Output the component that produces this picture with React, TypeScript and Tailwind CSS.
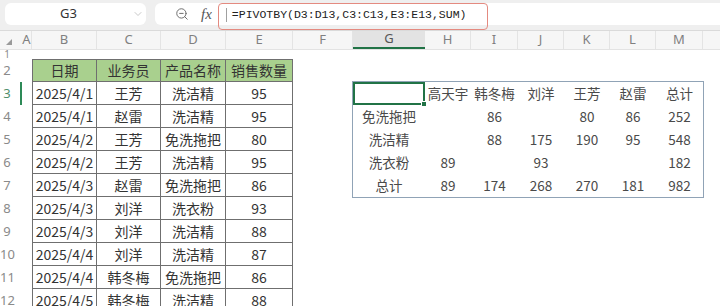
import { ChevronDown, ZoomOut } from "lucide-react";

const cols = [
  { l: "A", w: "w-[10px]" },
  { l: "B", w: "w-[65px]" },
  { l: "C", w: "w-[64px]" },
  { l: "D", w: "w-[65px]" },
  { l: "E", w: "w-[67px]" },
  { l: "F", w: "w-[60px]" },
  { l: "G", w: "w-[72px]", sel: true },
  { l: "H", w: "w-[46px]" },
  { l: "I", w: "w-[47px]" },
  { l: "J", w: "w-[46px]" },
  { l: "K", w: "w-[46px]" },
  { l: "L", w: "w-[46px]" },
  { l: "M", w: "w-[47px]" },
];

const tableW = ["w-[65px]", "w-[64px]", "w-[65px]", "w-[67px]"];

const data = [
  ["日期", "业务员", "产品名称", "销售数量"],
  ["2025/4/1", "王芳", "洗洁精", "95"],
  ["2025/4/1", "赵雷", "洗洁精", "95"],
  ["2025/4/2", "王芳", "免洗拖把", "80"],
  ["2025/4/2", "王芳", "洗洁精", "95"],
  ["2025/4/3", "赵雷", "免洗拖把", "86"],
  ["2025/4/3", "刘洋", "洗衣粉", "93"],
  ["2025/4/3", "刘洋", "洗洁精", "88"],
  ["2025/4/4", "刘洋", "洗洁精", "87"],
  ["2025/4/4", "韩冬梅", "免洗拖把", "86"],
  ["2025/4/5", "韩冬梅", "洗洁精", "88"],
];

const pivot = [
  ["", "高天宇", "韩冬梅", "刘洋", "王芳", "赵雷", "总计"],
  ["免洗拖把", "", "86", "", "80", "86", "252"],
  ["洗洁精", "", "88", "175", "190", "95", "548"],
  ["洗衣粉", "89", "", "93", "", "", "182"],
  ["总计", "89", "174", "268", "270", "181", "982"],
];

export default function App() {
  return (
    <div className="w-[720px] h-[306px] overflow-hidden bg-white font-['Noto_Sans_CJK_SC','Noto_Sans',sans-serif]">
      {/* 名称框 + 编辑栏 */}
      <div className="h-[31px] bg-[#efefef] flex items-start pt-[3px] pl-[5px] border-b border-[#dadada]">
        <div className="w-[141px] h-[22px] bg-white rounded-[6px] flex items-center">
          <span className="flex-1 text-center text-[13px] text-[#333] font-['Noto_Sans',sans-serif]">G3</span>
          <ChevronDown className="w-[12px] h-[12px] text-[#b5b5b5] mr-[2px]" strokeWidth={1.5} />
        </div>
        <div className="ml-[9px] flex-1 h-[22px] bg-white rounded-l-[6px] flex items-center">
          <ZoomOut className="ml-[20px] w-[14px] h-[14px] text-[#666]" strokeWidth={1.6} />
          <span className="ml-[12px] text-[15px] italic text-[#555] font-['Liberation_Serif',serif] leading-none">fx</span>
          <div className="ml-[6px] self-start w-[270px] h-[27px] border border-[#e48a80] rounded-[4px] flex items-center pb-[3px]">
            <div className="ml-[7px] w-px h-[14px] bg-[#a0a0a0]" />
            <span className="ml-[5px] text-[11.5px] text-[#222] font-['Liberation_Mono',monospace] whitespace-nowrap">
              =PIVOTBY(D3:D13,C3:C13,E3:E13,SUM)
            </span>
          </div>
        </div>
      </div>

      {/* 列标题 */}
      <div className="h-[19px] flex bg-[#f6f6f6] text-[13px] text-[#808080] font-['Noto_Sans',sans-serif] border-b border-[#e3e3e3]">
        <div className="w-[22px] h-full flex items-center pl-[6px] pt-[3px]">
          <svg width="6" height="6" viewBox="0 0 6 6">
            <polygon points="6,0 6,6 0,6" fill="#9a9a9a" />
          </svg>
        </div>
        {cols.map((c) => (
          <div
            key={c.l}
            className={
              c.sel
                ? `${c.w} h-full flex items-center justify-center bg-[#e3e3e3] border-b-2 border-[#217346] text-[#555]`
                : `${c.w} h-full flex items-center justify-center border-r border-[#e4e4e4]`
            }
          >
            {c.l}
          </div>
        ))}
      </div>

      <div className="flex">
        {/* 左侧：行号 + 数据表 */}
        <div className="w-[353px] flex flex-col">
          <div className="h-[9px] flex overflow-hidden">
            <div className="w-[22px] h-[9px] text-[10px] leading-[9px] text-[#8a8a8a] font-['Noto_Sans',sans-serif]">
              <span className="block w-[14px] text-center">1</span>
            </div>
          </div>
          {data.map((row, i) => (
            <div key={i} className="h-[23px] flex">
              <div
                className={
                  i === 1
                    ? "w-[22px] flex items-center text-[13px] text-[#4f8f6c] font-['Noto_Sans',sans-serif] border-r-2 border-[#2d8a57]"
                    : "w-[22px] flex items-center text-[13px] text-[#8a8a8a] font-['Noto_Sans',sans-serif]"
                }
              >
                <span className="w-[14px] text-center">{i + 2}</span>
              </div>
              <div className="w-[10px]" />
              {row.map((v, j) => (
                <div
                  key={j}
                  className={`${tableW[j]} h-full flex items-center justify-center text-[14px] text-[#333] border-r border-b border-[#6f6f6f] ${
                    j === 0 ? "border-l" : ""
                  } ${i === 0 ? "border-t bg-[#a9d08e]" : ""}`}
                >
                  {v}
                </div>
              ))}
            </div>
          ))}
        </div>

        {/* 右侧：透视结果 */}
        <div className="w-[350px] flex flex-col">
          <div className="h-[32px]" />
          <div className="ring-1 ring-[#90a3b6] grid grid-cols-[72px_46px_47px_46px_46px_46px_47px] grid-rows-[repeat(5,23px)] text-[13.5px] text-[#4a4a4a]">
            {pivot.map((row, i) =>
              row.map((v, j) =>
                i === 0 && j === 0 ? (
                  <div key={`${i}-${j}`} className="relative border-2 border-[#217346]">
                    <div className="absolute -right-[4px] -bottom-[4px] w-[6px] h-[6px] bg-[#217346] border border-white" />
                  </div>
                ) : (
                  <div key={`${i}-${j}`} className="flex items-center justify-center whitespace-nowrap">
                    {v}
                  </div>
                )
              )
            )}
          </div>
        </div>
      </div>
    </div>
  );
}
